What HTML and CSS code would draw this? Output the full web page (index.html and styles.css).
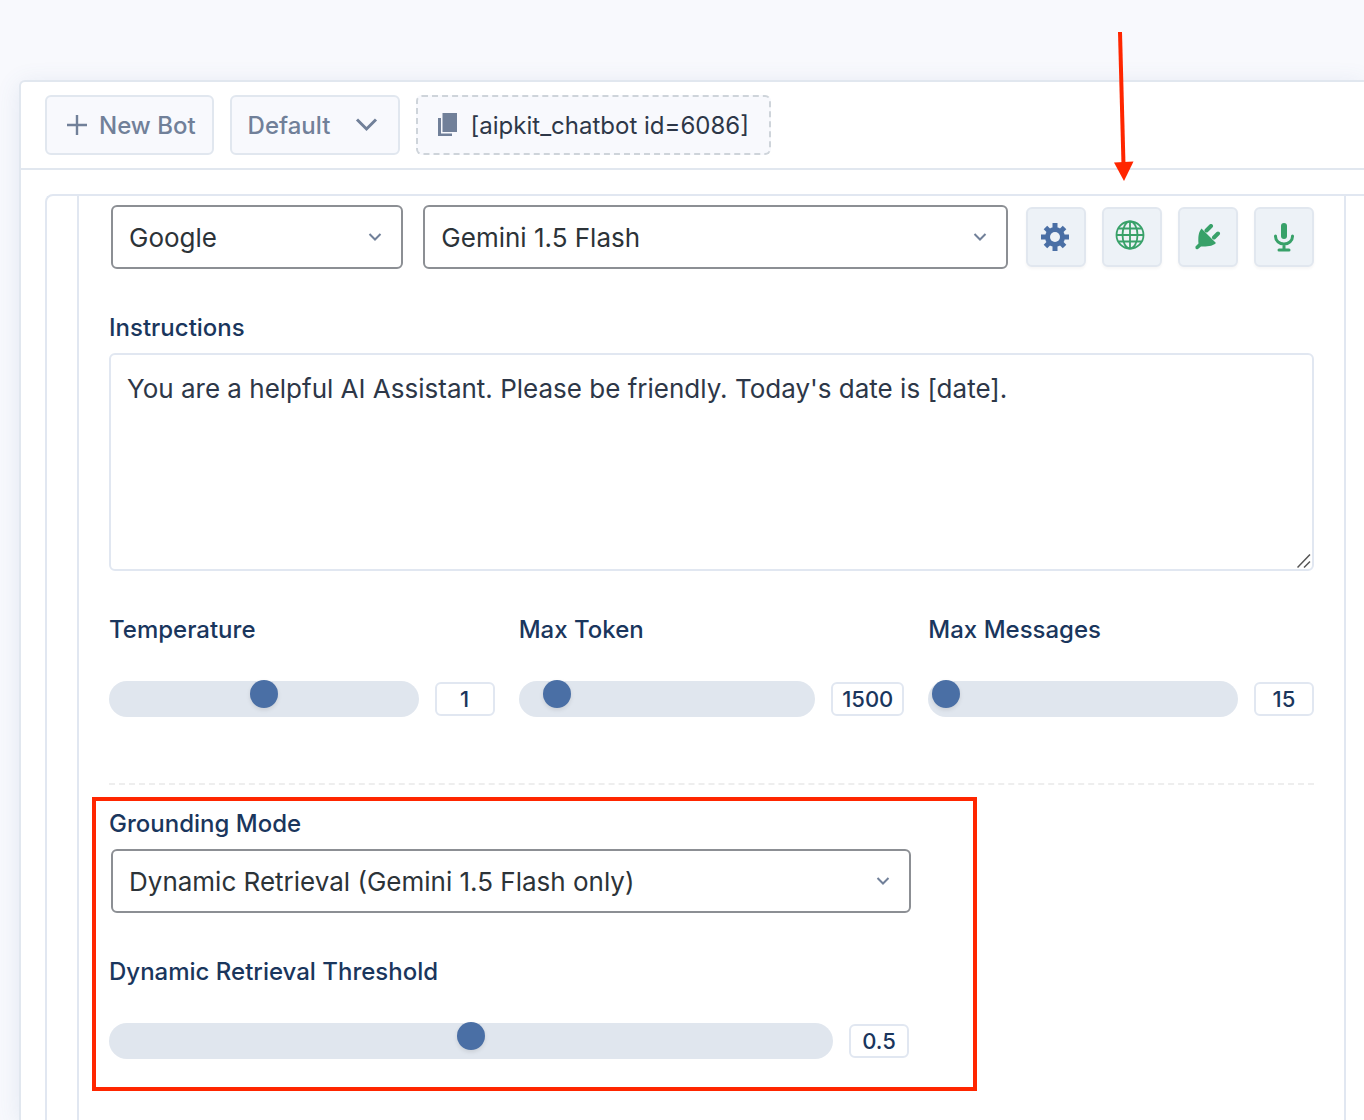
FILE: index.html
```html
<!DOCTYPE html>
<html lang="en">
<head>
<meta charset="utf-8">
<title>Chatbot settings</title>
<link rel="stylesheet" href="styles.css">
</head>
<body>
<main class="panel">
  <header class="toolbar">
    <button class="btn" type="button">
      <svg class="btn-plus" width="20" height="20" viewBox="0 0 20 20" aria-hidden="true"><path d="M10 0v20M0 10h20" stroke="currentColor" stroke-width="2.400" fill="none"/></svg>
      New Bot
    </button>
    <div class="select-wrap">
      <select class="bot-select" aria-label="Bot"><option>Default</option></select>
      <svg class="chevron chevron-large" width="24" height="16" viewBox="0 0 24 16" aria-hidden="true"><path d="M2 2.500 11.500 12 21 2.500" stroke="currentColor" stroke-width="3" fill="none"/></svg>
    </div>
    <button class="shortcode" type="button">
      <svg width="20" height="24" viewBox="0 0 20 24" aria-hidden="true"><path fill="currentColor" d="M4.500 0H19v19H4.500zM0 5h3v15.500h11V23H0z"/></svg>
      [aipkit_chatbot id=6086]
    </button>
  </header>

  <div class="frame">
    <form class="settings">
      <div class="model-row">
        <div class="select-wrap provider">
          <select class="select" aria-label="Provider"><option>Google</option></select>
          <svg class="chevron" width="14" height="10" viewBox="0 0 14 10" aria-hidden="true"><path d="M1.500 2 7 7.500 12.500 2" stroke="currentColor" stroke-width="2" fill="none"/></svg>
        </div>
        <div class="select-wrap model">
          <select class="select" aria-label="Model"><option>Gemini 1.5 Flash</option></select>
          <svg class="chevron" width="14" height="10" viewBox="0 0 14 10" aria-hidden="true"><path d="M1.500 2 7 7.500 12.500 2" stroke="currentColor" stroke-width="2" fill="none"/></svg>
        </div>
        <div class="tools">
          <button class="tool tool-settings" type="button" aria-label="Model settings">
            <svg width="30" height="28" viewBox="-14 -14 30 28" aria-hidden="true">
              <g fill="currentColor">
                <path d="M-2.500-14h5v28h-5z"/><path d="M-14-2.500h28v5h-28z"/>
                <path d="M-2.500-13.500h5v27h-5z" transform="rotate(45)"/><path d="M-2.500-13.500h5v27h-5z" transform="rotate(-45)"/>
                <circle r="10"/>
              </g>
              <circle class="gear-hole" r="5"/>
            </svg>
          </button>
          <button class="tool" type="button" aria-label="Web grounding">
            <svg class="globe" width="30" height="30" viewBox="0 0 30 30" aria-hidden="true"><g fill="none" stroke="currentColor" stroke-width="1.800"><circle cx="15" cy="15" r="13.500"/><ellipse cx="15" cy="15" rx="7.500" ry="13.500"/><path d="M15 1.500v27M1.500 15h27M3.500 8.500h23M3.500 21.500h23"/></g></svg>
            <svg class="arrow" width="20" height="152" viewBox="0 0 20 152" aria-hidden="true"><path d="M6 1 9.500 134" stroke="currentColor" stroke-width="4" fill="none"/><path d="M0 131.500 19.500 130.500 10 150z" fill="currentColor"/></svg>
          </button>
          <button class="tool" type="button" aria-label="Connections">
            <svg width="26" height="26" viewBox="0 0 26 26" aria-hidden="true"><path d="M6.500 4.500 21 19C17 22.500 12 22.500 6 22.500L3 25Q0 26 .5 22.500L3.500 19.500C3 13 3.500 8 6.500 4.500z" fill="currentColor"/><path d="M11.500 6.500 16 2M19 13.500l4-4" stroke="currentColor" stroke-width="4" stroke-linecap="round"/></svg>
          </button>
          <button class="tool" type="button" aria-label="Voice">
            <svg width="22" height="30" viewBox="0 0 22 30" aria-hidden="true"><rect x="8" y="1" width="6" height="16" rx="3" fill="currentColor"/><path d="M2.500 14v.5a8.500 7.500 0 0 0 17 0V14M11 22v5M6 28h10" fill="none" stroke="currentColor" stroke-width="3" stroke-linecap="round"/></svg>
          </button>
        </div>
      </div>

      <div class="field">
        <label class="label" for="instructions">Instructions</label>
        <div class="textarea-wrap">
          <textarea class="textarea" id="instructions">You are a helpful AI Assistant. Please be friendly. Today's date is [date].</textarea>
          <svg class="grip" width="14" height="14" viewBox="0 0 14 14" aria-hidden="true"><path d="M.5 13.500l12.500-13M7 13.500l6-6" stroke="currentColor" stroke-width="1.500" fill="none"/></svg>
        </div>
      </div>

      <div class="sliders">
        <div class="slider-field">
          <label class="label" for="temperature">Temperature</label>
          <div class="slider-row">
            <input class="range" id="temperature" type="range" min="0" max="2" step="0.1" value="1">
            <output class="value" for="temperature">1</output>
          </div>
        </div>
        <div class="slider-field">
          <label class="label" for="tokens">Max Token</label>
          <div class="slider-row">
            <input class="range" id="tokens" type="range" min="1" max="16384" value="1500">
            <output class="value" for="tokens">1500</output>
          </div>
        </div>
        <div class="slider-field">
          <label class="label" for="messages">Max Messages</label>
          <div class="slider-row">
            <input class="range" id="messages" type="range" min="1" max="1024" value="15">
            <output class="value" for="messages">15</output>
          </div>
        </div>
      </div>

      <section class="grounding">
        <div class="grounding-fields">
          <label class="label" for="grounding">Grounding Mode</label>
          <div class="select-wrap grounding-select">
            <select class="select" id="grounding"><option>Dynamic Retrieval (Gemini 1.5 Flash only)</option></select>
            <svg class="chevron" width="14" height="10" viewBox="0 0 14 10" aria-hidden="true"><path d="M1.500 2 7 7.500 12.500 2" stroke="currentColor" stroke-width="2" fill="none"/></svg>
          </div>
          <div class="slider-field threshold">
            <label class="label" for="threshold">Dynamic Retrieval Threshold</label>
            <div class="slider-row">
              <input class="range" id="threshold" type="range" min="0" max="1" step="0.01" value="0.5">
              <output class="value" for="threshold">0.5</output>
            </div>
          </div>
          <div class="highlight"></div>
        </div>
      </section>
    </form>
  </div>
</main>
</body>
</html>
```
FILE: styles.css
```css
* { box-sizing: border-box; }

body {
  margin: 0;
  padding: 80px 0 0 19px;
  min-height: 100vh;
  display: flex;
  flex-direction: column;
  overflow: hidden;
  background: #f8f9fd;
  color: #2d3748;
  font-family: Inter, "Liberation Sans", sans-serif;
  font-size: 26px;
}

button, select, textarea, output { font: inherit; }
svg { display: block; flex: none; }

.panel {
  flex: 1;
  display: flex;
  flex-direction: column;
  background: #fff;
  border: solid #e1e7ef;
  border-width: 2px 0 0 2px;
  border-radius: 6px 0 0 0;
  box-shadow: 0 4px 24px rgba(74, 111, 165, 0.12);
}

.toolbar {
  display: flex;
  gap: 16px;
  padding: 13px 24px;
  border-bottom: 2px solid #e1e7ef;
}

.btn, .bot-select, .shortcode {
  height: 60px;
  border: 2px solid #e1e7ef;
  border-radius: 6px;
  background: #f8f9fd;
  color: #718099;
  font-size: 24px;
  font-weight: 500;
}

.btn {
  display: flex;
  align-items: center;
  gap: 12px;
  padding: 0 16px 0 20px;
}

.select-wrap { position: relative; color: #718099; }
.bot-select { appearance: none; display: block; width: 170px; padding: 0 16px; }
.chevron { position: absolute; right: 21px; top: 27px; pointer-events: none; }
.chevron-large { top: 22px; }

.shortcode {
  display: flex;
  align-items: center;
  gap: 13px;
  padding: 0 20px;
  border: 2px dashed #ced4da;
  color: #2d3748;
  font-weight: 400;
}
.shortcode svg { color: #718099; }

.frame {
  flex: 1;
  display: flex;
  margin: 24px 0 0 24px;
  padding: 0 18px 0 30px;
  border: solid #e1e7f1;
  border-width: 2px 0 0 2px;
  border-radius: 8px 0 0 0;
}

.settings {
  flex: 1;
  min-width: 0;
  padding: 9px 30px 0;
  border: solid #e1e7f1;
  border-width: 0 2px;
}

.model-row { display: flex; padding-left: 2px; }
.provider { flex: 1; margin-right: 20px; }
.model { flex: 2; margin-right: 18px; }

.select {
  appearance: none;
  display: block;
  width: 100%;
  height: 64px;
  padding: 0 16px;
  border: 2px solid #8c8f94;
  border-radius: 6px;
  background: #fff;
  color: #2c3338;
}

.tools { display: flex; align-items: center; gap: 16px; }

.tool {
  position: relative;
  display: flex;
  align-items: center;
  justify-content: center;
  width: 60px;
  height: 60px;
  padding: 0;
  border: 2px solid #e1e7ef;
  border-radius: 6px;
  background: #edf2f7;
  box-shadow: 0 2px 3px rgba(0, 0, 0, 0.04);
  color: #38a169;
}
.tool-settings { color: #4a6fa5; }
.gear-hole { fill: #edf2f7; }
.globe { margin: 0 4px 4px 0; }
.arrow { position: absolute; left: 10px; bottom: 82px; color: #ff2600; }

.label {
  display: block;
  color: #1a365d;
  font-size: 24px;
  font-weight: 500;
  line-height: 32px;
}

.field { margin-top: 43px; }
.textarea-wrap { position: relative; margin-top: 9px; }
.textarea {
  display: block;
  width: 100%;
  height: 218px;
  padding: 16px;
  border: 2px solid #e1e7f1;
  border-radius: 6px;
  background: #fff;
  color: #2d3748;
  line-height: 36px;
  resize: vertical;
}
.textarea::-webkit-resizer { background: transparent; }
.grip { position: absolute; right: 3px; bottom: 3px; color: #555; pointer-events: none; }

.sliders {
  display: grid;
  grid-template-columns: repeat(3, minmax(0, 1fr));
  gap: 24px;
  margin-top: 43px;
}

.slider-row { display: flex; align-items: center; gap: 16px; margin-top: 35px; }

.range {
  appearance: none;
  flex: 1;
  min-width: 0;
  height: 36px;
  margin: 0;
  border-radius: 18px;
  background: #e0e6ee;
}
.range::-webkit-slider-runnable-track { height: 36px; }
.range::-webkit-slider-thumb {
  appearance: none;
  width: 28px;
  height: 28px;
  margin-top: -1px;
  border-radius: 50%;
  background: #4a6fa5;
  box-shadow: 0 2px 4px rgba(0, 0, 0, 0.1);
}

.value {
  min-width: 60px;
  height: 34px;
  padding: 0 9px;
  border: 2px solid #e1e7f1;
  border-radius: 6px;
  color: #1a365d;
  font-size: 22px;
  font-weight: 500;
  line-height: 30px;
  text-align: center;
}

.grounding {
  margin-top: 66px;
  padding-top: 23px;
  border-top: 2px dashed #eeeeee;
}
.grounding-fields { position: relative; max-width: 800px; }
.grounding-select { margin: 9px -2px 0 2px; }
.threshold { margin-top: 43px; }
.highlight {
  position: absolute;
  inset: -11px -68px -32px -17px;
  border: 4px solid #ff2600;
  pointer-events: none;
}
```
